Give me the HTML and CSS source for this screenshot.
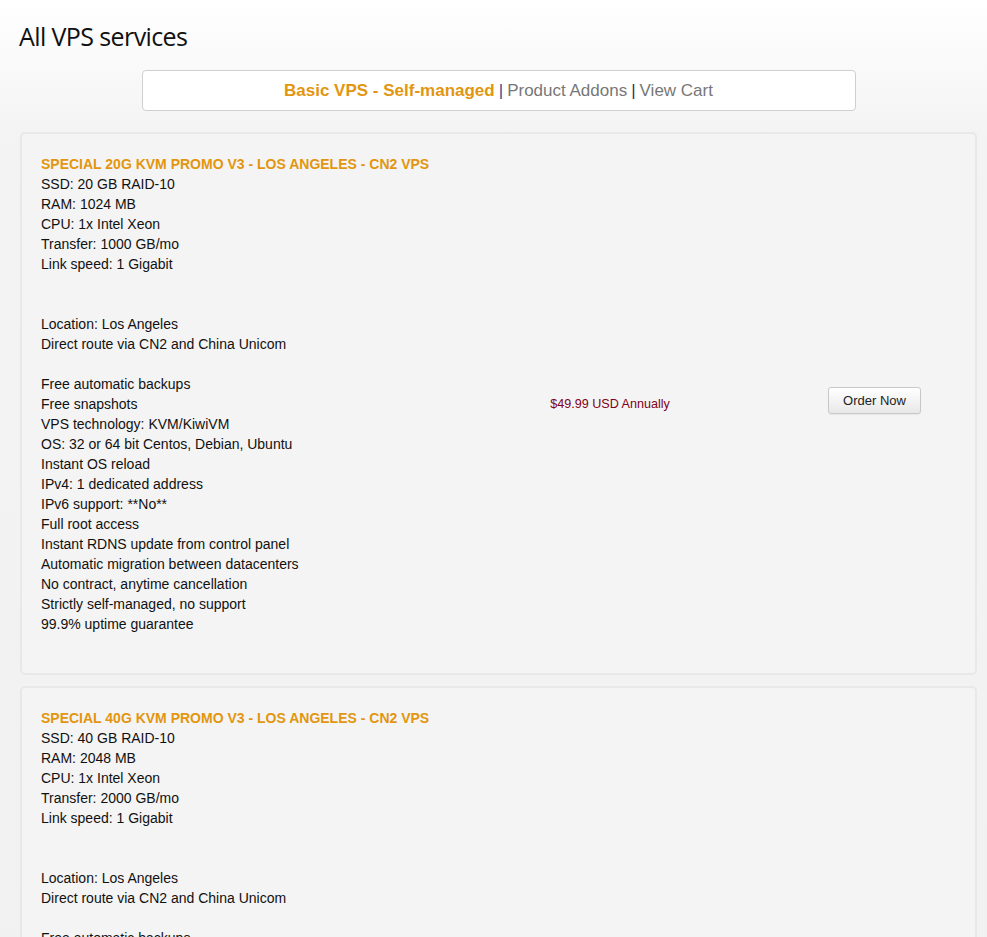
FILE: index.html
```html
<!DOCTYPE html>
<html>
<head>
<meta charset="utf-8">
<link rel="stylesheet" href="styles.css">
</head>
<body>
<div class="page">
  <h1 class="title">All VPS services</h1>
  <div class="nav">
    <span class="nav-current">Basic VPS - Self-managed</span>
    <span class="sep sep1">|</span>
    <span class="nav-link">Product Addons</span>
    <span class="sep sep2">|</span>
    <span class="nav-link">View Cart</span>
  </div>

  <div class="card">
    <div class="desc">
      <div class="pname">SPECIAL 20G KVM PROMO V3 - LOS ANGELES - CN2 VPS</div>
      <div>SSD: 20 GB RAID-10</div>
      <div>RAM: 1024 MB</div>
      <div>CPU: 1x Intel Xeon</div>
      <div>Transfer: 1000 GB/mo</div>
      <div>Link speed: 1 Gigabit</div>
      <div class="blank"></div>
      <div class="blank"></div>
      <div>Location: Los Angeles</div>
      <div>Direct route via CN2 and China Unicom</div>
      <div class="blank"></div>
      <div>Free automatic backups</div>
      <div>Free snapshots</div>
      <div>VPS technology: KVM/KiwiVM</div>
      <div>OS: 32 or 64 bit Centos, Debian, Ubuntu</div>
      <div>Instant OS reload</div>
      <div>IPv4: 1 dedicated address</div>
      <div>IPv6 support: **No**</div>
      <div>Full root access</div>
      <div>Instant RDNS update from control panel</div>
      <div>Automatic migration between datacenters</div>
      <div>No contract, anytime cancellation</div>
      <div>Strictly self-managed, no support</div>
      <div>99.9% uptime guarantee</div>
    </div>
    <div class="price">$49.99 USD Annually</div>
    <div class="action"><button class="btn">Order Now</button></div>
  </div>

  <div class="card">
    <div class="desc">
      <div class="pname">SPECIAL 40G KVM PROMO V3 - LOS ANGELES - CN2 VPS</div>
      <div>SSD: 40 GB RAID-10</div>
      <div>RAM: 2048 MB</div>
      <div>CPU: 1x Intel Xeon</div>
      <div>Transfer: 2000 GB/mo</div>
      <div>Link speed: 1 Gigabit</div>
      <div class="blank"></div>
      <div class="blank"></div>
      <div>Location: Los Angeles</div>
      <div>Direct route via CN2 and China Unicom</div>
      <div class="blank"></div>
      <div>Free automatic backups</div>
      <div>Free snapshots</div>
      <div>VPS technology: KVM/KiwiVM</div>
      <div>OS: 32 or 64 bit Centos, Debian, Ubuntu</div>
      <div>Instant OS reload</div>
      <div>IPv4: 1 dedicated address</div>
      <div>IPv6 support: **No**</div>
      <div>Full root access</div>
      <div>Instant RDNS update from control panel</div>
      <div>Automatic migration between datacenters</div>
      <div>No contract, anytime cancellation</div>
      <div>Strictly self-managed, no support</div>
      <div>99.9% uptime guarantee</div>
    </div>
    <div class="price">$89.99 USD Annually</div>
    <div class="action"><button class="btn">Order Now</button></div>
  </div>
</div>
</body>
</html>
```

FILE: styles.css
```css
html, body {
  margin: 0;
  padding: 0;
}
body {
  background: linear-gradient(#ffffff 0px, #f3f3f3 140px, #f1f1f1 100%);
  background-color: #f1f1f1;
  font-family: "Liberation Sans", Arial, sans-serif;
  font-size: 14px;
  color: #111;
}
.page {
  padding: 0 10px 0 20px;
}
.title {
  margin: 0;
  padding: 19px 0 0 0;
  margin-left: -1px;
  height: 70px;
  box-sizing: border-box;
  font-family: "Open Sans", "Noto Sans", sans-serif;
  font-weight: 400;
  font-size: 25px;
  line-height: 34px;
  letter-spacing: -0.6px;
  color: #111;
}
.nav {
  width: 712px;
  height: 39px;
  margin: 0 auto 21px;
  background: #fff;
  border: 1px solid #cfcfcf;
  border-radius: 4px;
  display: flex;
  align-items: center;
  justify-content: center;
  gap: 4px;
  font-size: 17px;
  position: relative;
  left: 0px;
}
.nav-current {
  color: #e2960f;
  font-weight: bold;
}
.nav-link {
  color: #777;
}
.sep1 { color: #1d4f91; }
.sep2 { color: #4b1d5c; }
.card {
  background: #f4f4f4;
  border: 2px solid #e8e8e8;
  border-radius: 5px;
  display: grid;
  grid-template-columns: 1fr 200px 265px;
  align-items: center;
  padding: 20px 0 39px 19px;
  margin-bottom: 11px;
}
.desc {
  line-height: 20px;
}
.blank {
  height: 20px;
}
.pname {
  color: #e2960f;
  font-weight: bold;
  font-size: 14px;
}
.price {
  font-size: 12.6px;
  color: #800020;
  text-align: center;
  padding-top: 20px;
}
.action {
  text-align: right;
  padding-right: 54px;
  padding-top: 12px;
}
.btn {
  font-family: "Liberation Sans", Arial, sans-serif;
  font-size: 13px;
  color: #222;
  width: 93px;
  height: 27px;
  border: 1px solid #c8c8c8;
  border-radius: 3px;
  background: linear-gradient(#ffffff, #e8e8e8);
  box-shadow: 0 1px 1px rgba(0,0,0,0.05);
  padding: 0;
}
```
